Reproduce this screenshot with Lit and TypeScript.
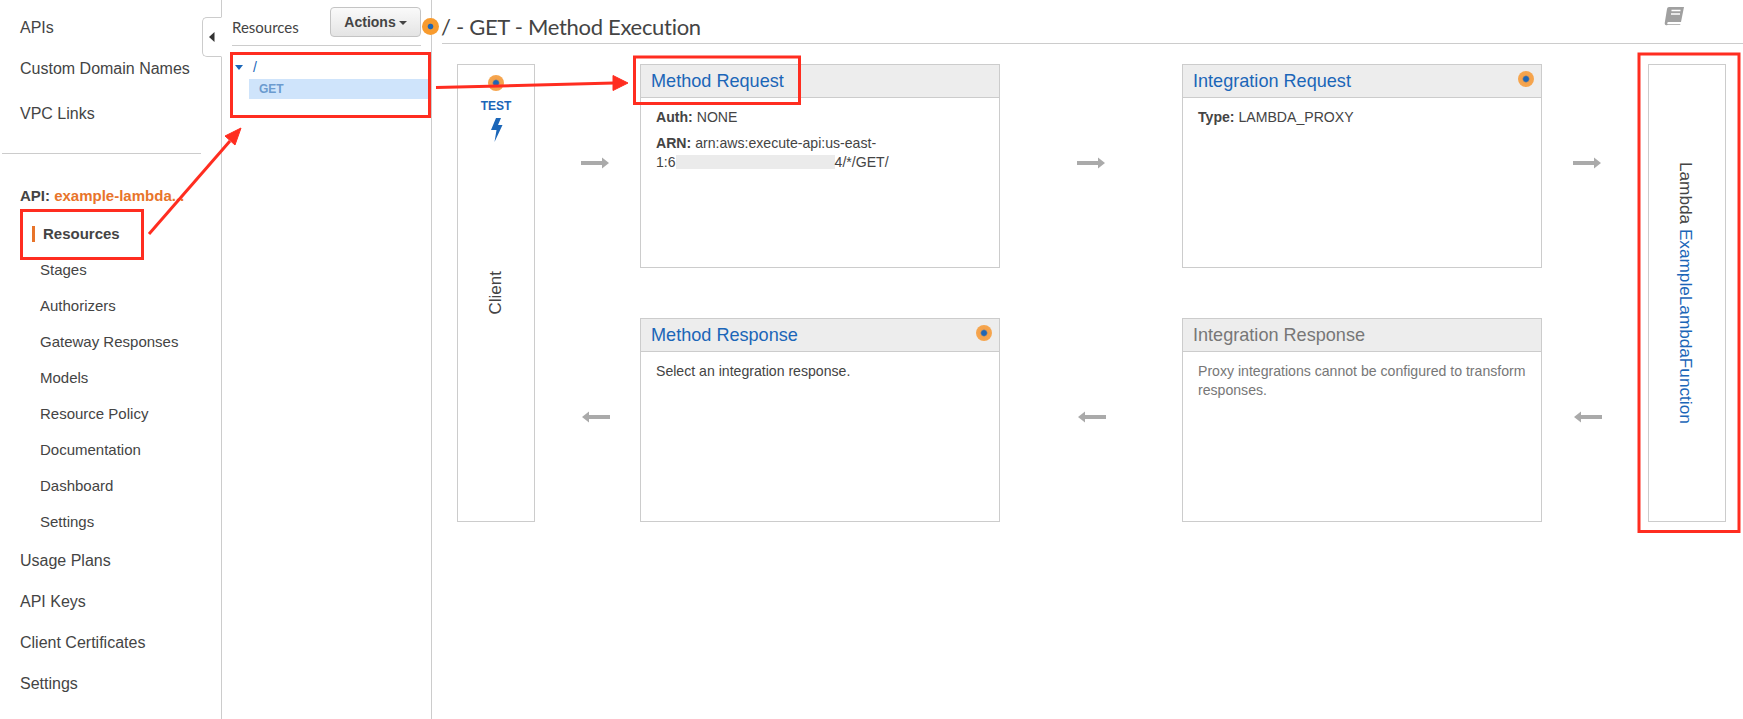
import { LitElement, html, css, svg } from "lit";
import { customElement } from "lit/decorators.js";

const arrowRight = svg`<path d="M0 4h21V.5l7 5.500-7 5.500V8H0z" fill="#aaa"/>`;
const arrowLeft = svg`<path d="M28 4H7V.5L0 6l7 5.500V8h21z" fill="#aaa"/>`;

@customElement("app-root")
export class AppRoot extends LitElement {
  static styles = css`
    :host { display: flex; position: relative; width: 1743px; height: 719px; overflow: hidden; background: #fff; color: #444; font-family: "Liberation Sans", Arial, sans-serif; font-size: 14px; }
    * { box-sizing: border-box; }
    .sidebar { width: 222px; flex: none; padding-top: 7px; border-right: 1px solid #ccc; position: relative; }
    .top { height: 41px; line-height: 41px; padding-left: 20px; font-size: 16px; white-space: nowrap; }
    .vpc { margin-top: 4px; }
    .sep { width: 199px; height: 1px; margin: 19px 0 24px 2px; background: #ccc; }
    .api { height: 36px; line-height: 36px; padding-left: 20px; font-size: 15px; font-weight: 700; white-space: nowrap; }
    .api span { color: #e8742a; }
    .subs { height: 314px; margin: 2px 0 10px; overflow: hidden; }
    .sub { height: 36px; line-height: 36px; padding-left: 40px; font-size: 15px; white-space: nowrap; }
    .active { padding-left: 32px; font-weight: 700; display: flex; align-items: center; }
    .active i { width: 3px; height: 16px; margin-right: 8px; background: #e8742a; }
    .tab { position: absolute; right: -1px; top: 17px; width: 20px; height: 40px; border: 1px solid #ccc; border-right-color: #fff; border-radius: 5px 0 0 5px; background: #fff; display: flex; align-items: center; justify-content: center; }
    .tab svg { width: 6px; height: 10px; }
    .res { width: 210px; flex: none; padding: 7px 10px 0; border-right: 1px solid #ccc; }
    .res-head { height: 39px; padding-bottom: 9px; border-bottom: 1px solid #ccc; display: flex; justify-content: space-between; align-items: center; }
    .res-title { font-family: Lato, sans-serif; font-size: 15px; margin-top: 10px; }
    .btn { width: 91px; height: 30px; display: flex; align-items: center; justify-content: center; gap: 3px; border: 1px solid #c4c4c4; border-radius: 4px; background: linear-gradient(#fafafa, #e4e4e4); font-size: 14px; font-weight: 700; }
    .caret { width: 0; height: 0; border: 4px solid transparent; border-top-color: #444; border-bottom: 0; margin-top: 2px; }
    .tree-root { height: 33px; display: flex; align-items: center; padding: 9px 0 0 3px; color: #1b66b8; }
    .tree-root i { width: 0; height: 0; border: 4px solid transparent; border-top: 5px solid #1b66b8; border-bottom: 0; margin-right: 10px; }
    .tree-get { height: 20px; margin: 0 -7px 0 17px; padding-left: 10px; line-height: 20px; background: #cfe4fb; color: #6b9bcf; font-size: 12px; font-weight: 700; }
    .main { flex: 1; min-width: 0; position: relative; }
    .head { height: 44px; margin-left: 10px; padding-top: 10px; border-bottom: 1px solid #ccc; display: flex; align-items: center; justify-content: space-between; }
    .title-wrap { display: flex; align-items: center; margin-left: -20px; }
    .title { margin-left: 2px; font-family: Lato, sans-serif; font-size: 22px; letter-spacing: -0.3px; color: #444; white-space: nowrap; }
    .book { width: 21px; height: 20px; margin: -22px 58px 0 0; }
    .dot { width: 16px; height: 16px; flex: none; border-radius: 50%; background: radial-gradient(circle, #1f66b5 0 21%, #f4a14a 34%, #f6a750 78%, #fbd5a6 100%); }
    .dot.big { width: 17px; height: 17px; background: radial-gradient(circle, #1f66b5 0 20%, #f89b2e 27%); }
    .grid { display: grid; margin: 20px 0 0 25px; grid-template-columns: 78px 105px 360px 182px 360px 106px 78px; grid-template-rows: 204px 204px; row-gap: 50px; }
    .side { grid-row: 1 / 3; border: 1px solid #ccc; display: flex; flex-direction: column; align-items: center; justify-content: center; position: relative; }
    .client { grid-column: 1; }
    .lambda { grid-column: 7; }
    .client-top { position: absolute; top: 10px; left: 0; right: 0; display: flex; flex-direction: column; align-items: center; color: #1b66b8; font-size: 12px; font-weight: 700; }
    .client-top span { margin: 8px 0 5px; line-height: 14px; }
    .bolt { width: 14px; height: 24px; }
    .up { writing-mode: vertical-rl; transform: rotate(180deg); font-size: 17px; white-space: nowrap; }
    .down { writing-mode: vertical-rl; font-size: 17.200px; white-space: nowrap; margin-right: 4px; }
    a { color: #1b66b8; text-decoration: none; }
    .box { border: 1px solid #ccc; }
    .box-head { height: 33px; padding: 0 7px 0 10px; background: #ededed; border-bottom: 1px solid #ccc; display: flex; align-items: center; justify-content: space-between; font-size: 18.100px; color: #1b66b8; white-space: nowrap; }
    .box-head.off { color: #777; }
    .box-head .dot { margin-top: -4px; }
    .box-body { padding: 10px 15px; font-size: 14.100px; line-height: 19px; }
    .box-body p { margin: 0 0 7px; }
    .box-body.off { color: #777; }
    .redact { display: inline-block; width: 159px; height: 14px; vertical-align: -2px; background: #ebebeb; }
    .arrow { width: 28px; height: 12px; margin-top: -6px; align-self: center; }
    .a1 { margin-left: 46px; } .a2 { margin-left: 77px; } .a3 { margin-left: 31px; }
    .a4 { margin-left: 47px; } .a5 { margin-left: 78px; } .a6 { margin-left: 32px; }
    .marks { position: absolute; left: 0; top: 0; width: 1743px; height: 719px; pointer-events: none; }
  `;

  render() {
    const sub = ["Stages", "Authorizers", "Gateway Responses", "Models", "Resource Policy", "Documentation", "Dashboard", "Settings"];
    const bottom = ["Usage Plans", "API Keys", "Client Certificates", "Settings"];
    return html`
      <nav class="sidebar">
        <div class="top">APIs</div>
        <div class="top">Custom Domain Names</div>
        <div class="top vpc">VPC Links</div>
        <div class="sep"></div>
        <div class="api">API: <span>example-lambda...</span></div>
        <div class="subs">
          <div class="sub active"><i></i>Resources</div>
          ${sub.map((s) => html`<div class="sub">${s}</div>`)}
        </div>
        ${bottom.map((s) => html`<div class="top">${s}</div>`)}
        <div class="tab"><svg viewBox="0 0 6 10"><path d="M5.500 0v10L0 5z" fill="#333"/></svg></div>
      </nav>
      <section class="res">
        <div class="res-head">
          <span class="res-title">Resources</span>
          <div class="btn">Actions<span class="caret"></span></div>
        </div>
        <div class="tree-root"><i></i>/</div>
        <div class="tree-get">GET</div>
      </section>
      <section class="main">
        <header class="head">
          <div class="title-wrap"><span class="dot big"></span><span class="title">/ - GET - Method Execution</span></div>
          <svg class="book" viewBox="0 0 21 20">
            <path d="M5 1h15l-3 15H4.500c-1 0-1.300.8-1.300 1.300s.4 1 1.200 1h12l-.2.7H3.500C1.500 20 .4 18.500.8 16.500L3 3c.2-1.200 1-2 2-2z" fill="#a0a0a0"/>
            <path d="M7.500 4.500h9M7 8h9" stroke="#fff" stroke-width="1.500" fill="none"/>
          </svg>
        </header>
        <div class="grid">
          <div class="side client">
            <div class="client-top">
              <div class="dot"></div>
              <span>TEST</span>
              <svg class="bolt" viewBox="0 0 14 24"><path d="M7 0h5L9 7h4.500L5.500 24 7.500 12H2z" fill="#1b66b8"/></svg>
            </div>
            <span class="up">Client</span>
          </div>
          <svg class="arrow a1" viewBox="0 0 28 12">${arrowRight}</svg>
          <div class="box">
            <div class="box-head"><a>Method Request</a></div>
            <div class="box-body">
              <p><b>Auth:</b> NONE</p>
              <p><b>ARN:</b> arn:aws:execute-api:us-east-<br />1:6<span class="redact"></span>4/*/GET/</p>
            </div>
          </div>
          <svg class="arrow a2" viewBox="0 0 28 12">${arrowRight}</svg>
          <div class="box">
            <div class="box-head"><a>Integration Request</a><span class="dot"></span></div>
            <div class="box-body"><p><b>Type:</b> LAMBDA_PROXY</p></div>
          </div>
          <svg class="arrow a3" viewBox="0 0 28 12">${arrowRight}</svg>
          <div class="side lambda"><span class="down">Lambda <a>ExampleLambdaFunction</a></span></div>

          <svg class="arrow a4" viewBox="0 0 28 12">${arrowLeft}</svg>
          <div class="box">
            <div class="box-head"><a>Method Response</a><span class="dot"></span></div>
            <div class="box-body"><p>Select an integration response.</p></div>
          </div>
          <svg class="arrow a5" viewBox="0 0 28 12">${arrowLeft}</svg>
          <div class="box">
            <div class="box-head off">Integration Response</div>
            <div class="box-body off"><p>Proxy integrations cannot be configured to transform responses.</p></div>
          </div>
          <svg class="arrow a6" viewBox="0 0 28 12">${arrowLeft}</svg>
        </div>
      </section>
      <svg class="marks" viewBox="0 0 1743 719" fill="none" stroke="#ff2d20" stroke-width="3">
        <rect x="21.500" y="210.500" width="121" height="48" />
        <rect x="231.500" y="53.500" width="198" height="63" />
        <rect x="634.500" y="57" width="165" height="46.500" />
        <rect x="1639" y="54" width="100" height="477.500" />
        <path d="M149 234L230 141" />
        <path d="M241 128L235 145 225 136z" fill="#ff2d20" stroke-width="1" />
        <path d="M436 87.500L614 83" />
        <path d="M628 83L613 75.500V90.500z" fill="#ff2d20" stroke-width="1" />
      </svg>
    `;
  }
}
